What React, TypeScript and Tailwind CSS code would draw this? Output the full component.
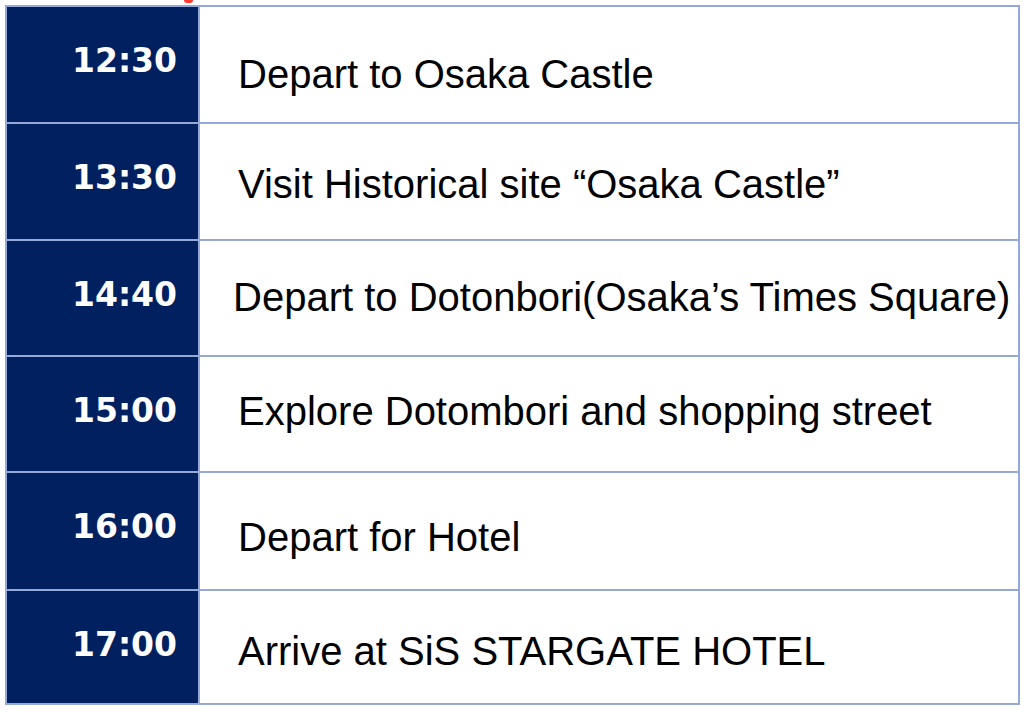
import React from "react";

interface Stop {
  time: string;
  label: string;
  height: number;
  textTop: number;
  textLeft: number;
}

const stops: Stop[] = [
  { time: "12:30", label: "Depart to Osaka Castle", height: 117, textTop: 47, textLeft: 38 },
  { time: "13:30", label: "Visit Historical site \u201cOsaka Castle\u201d", height: 117, textTop: 40, textLeft: 38 },
  { time: "14:40", label: "Depart to Dotonbori(Osaka\u2019s Times Square)", height: 116, textTop: 36, textLeft: 33 },
  { time: "15:00", label: "Explore Dotombori and shopping street", height: 116, textTop: 34, textLeft: 38 },
  { time: "16:00", label: "Depart for Hotel", height: 118, textTop: 44, textLeft: 38 },
  { time: "17:00", label: "Arrive at SiS STARGATE HOTEL", height: 116, textTop: 40, textLeft: 38 },
];

const ScheduleRow: React.FC<{ stop: Stop; last: boolean }> = ({ stop, last }) => (
  <div
    className={
      "flex border-t-2 border-x-2 border-[#94a8da] " + (last ? "border-b-2" : "")
    }
    style={{ height: stop.height }}
  >
    <div className="w-[191px] shrink-0 bg-[#002060] flex justify-end pr-[21px] pt-[37px]">
      <span className="font-[DejaVu_Sans,sans-serif] font-bold text-[33px] leading-none text-white">
        {stop.time}
      </span>
    </div>
    <div className="w-[2px] shrink-0 bg-[#94a8da]" />
    <div
      className="flex-1 bg-white whitespace-nowrap"
      style={{ paddingTop: stop.textTop, paddingLeft: stop.textLeft }}
    >
      <span className="font-[Liberation_Sans,Arial,sans-serif] text-[40px] leading-none text-black">
        {stop.label}
      </span>
    </div>
  </div>
);

export default function App() {
  return (
    <div className="w-[1024px] h-[712px] bg-white overflow-hidden">
      {/* edge of a heading cut off above */}
      <div className="h-[5px] pl-[184px]">
        <div className="w-[9px] h-[3px] rounded-b-full bg-[#ff3b30]" />
      </div>
      <div className="pl-[5px] w-[1020px]">
        {stops.map((s, i) => (
          <ScheduleRow key={s.time} stop={s} last={i === stops.length - 1} />
        ))}
      </div>
    </div>
  );
}
